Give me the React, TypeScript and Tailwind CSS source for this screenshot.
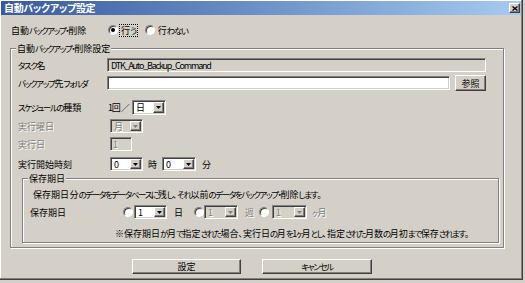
import React from 'react';

const sunken =
  'border border-t-[#808080] border-l-[#808080] border-r-white border-b-white shadow-[inset_1px_1px_0_#404040,inset_-1px_-1px_0_#d4d0c8]';
const raised =
  'border border-t-white border-l-white border-r-[#404040] border-b-[#404040] shadow-[inset_-1px_-1px_0_#808080,inset_1px_1px_0_#d4d0c8] bg-[#d4d0c8]';
const etched = 'border border-[#808080] shadow-[inset_1px_1px_0_#fff,1px_1px_0_#fff]';
const dis = 'text-[#808080] [text-shadow:1px_1px_0_#fff]';

// kana in the old UI font are much narrower than kanji, so squeeze them separately
function J({ t }: { t: string }) {
  const parts = t.match(/[\u4e00-\u9fff※\u3000-\u303f\uff00-\uffef]+|[A-Za-z0-9_]+|[^\u4e00-\u9fff※\u3000-\u303f\uff00-\uffefA-Za-z0-9_]+/g) ?? [];
  return (
    <>
      {parts.map((p, i) =>
        /[\u4e00-\u9fff※\u3000-\u303f\uff00-\uffef]/.test(p) ? (
          <span key={i} className="tracking-[0px]">{p}</span>
        ) : /[A-Za-z0-9_]/.test(p) ? (
          <span key={i} className="tracking-[-1.2px]">{p}</span>
        ) : (
          <span key={i} className="text-[8.5px] tracking-[-1.4px]">{p}</span>
        )
      )}
    </>
  );
}

function Combo({ value, className, disabled }: { value: string; className: string; disabled?: boolean }) {
  return (
    <div className={`flex p-[1px] ${sunken} ${disabled ? 'bg-[#d4d0c8]' : 'bg-white'} ${className}`}>
      <span className={`flex-1 pl-[2px] flex items-center ${disabled ? dis : ''}`}>{value}</span>
      <span className={`w-[11px] h-full flex items-center justify-center ${raised}`}>
        <svg width="5" height="3" viewBox="0 0 5 3">
          <path d="M0 0h5L2.5 3z" fill={disabled ? '#808080' : '#000'} />
        </svg>
      </span>
    </div>
  );
}

function Radio({ checked }: { checked?: boolean }) {
  return (
    <span className="w-[10px] h-[10px] shrink-0 rounded-full bg-white flex items-center justify-center border border-t-[#808080] border-l-[#808080] border-r-white border-b-white shadow-[inset_1px_1px_0_#404040]">
      {checked && <span className="w-[4px] h-[4px] rounded-full bg-black" />}
    </span>
  );
}

function GroupTitle({ t }: { t: string }) {
  return (
    <div className="w-fit ml-[5px] px-[1px] -mt-[7px] h-[13px] flex items-center bg-[#d4d0c8]">
      <J t={t} />
    </div>
  );
}

export default function App() {
  return (
    <div className="w-[525px] h-[283px] bg-[#d4d0c8] overflow-hidden text-black text-[9px] leading-none font-['Noto_Sans_CJK_JP',sans-serif] [font-feature-settings:'palt']">
      <div className="w-[523px] h-[280px] pt-[1px] shadow-[inset_-1px_-1px_0_#404040,inset_-2px_-2px_0_#808080,inset_1px_1px_0_#fff]">
        {/* title bar */}
        <div className="mx-[1px] mr-[2px] h-[14px] flex items-center justify-between bg-gradient-to-r from-[#3a5a9e] to-[#a6caf0]">
          <span className="ml-[3px] text-white font-bold text-[10px] tracking-[-0.3px]">自動バックアップ設定</span>
          <span className={`w-[11px] h-[10px] mr-[1px] flex items-center justify-center ${raised}`}>
            <svg width="6" height="5" viewBox="0 0 6 5">
              <path d="M0.5 0.5l5 4M5.5 0.5l-5 4" stroke="#000" strokeWidth="1.3" />
            </svg>
          </span>
        </div>

        {/* enable row */}
        <div className="mt-[8px] h-[14px] flex items-center">
          <span className="ml-[11px] w-[97px]"><J t="自動バックアップ・削除" /></span>
          <Radio checked />
          <span className="ml-[2px] px-[1px] py-[1px] outline outline-1 outline-dotted outline-black"><J t="行う" /></span>
          <span className="ml-[8px]"><Radio /></span>
          <span className="ml-[3px]"><J t="行わない" /></span>
        </div>

        {/* settings group */}
        <div className={`mt-[11px] ml-[10px] w-[494px] h-[200px] ${etched}`}>
          <GroupTitle t="自動バックアップ・削除設定" />

          <div className="mt-[3px] h-[14px] flex items-center">
            <span className="ml-[7px] w-[89px]"><J t="タスク名" /></span>
            <div className={`w-[379px] h-[14px] pl-[3px] flex items-center bg-[#d4d0c8] ${sunken}`}>
              <J t="DTK_Auto_Backup_Command" />
            </div>
          </div>

          <div className="mt-[4px] h-[14px] flex items-center">
            <span className="ml-[7px] w-[89px]"><J t="バックアップ先フォルダ" /></span>
            <div className={`w-[343px] h-[14px] bg-white ${sunken}`} />
            <span className={`ml-[5px] w-[31px] h-[16px] flex items-center justify-center ${raised}`}><J t="参照" /></span>
          </div>

          <div className="mt-[10px] h-[14px] flex items-center">
            <span className="ml-[7px] w-[90px]"><J t="スケジュールの種類" /></span>
            <span className="w-[24px]"><J t="1回／" /></span>
            <Combo value="日" className="w-[34px] h-[15px]" />
          </div>

          <div className="mt-[5px] h-[14px] flex items-center">
            <span className={`ml-[7px] w-[92px] ${dis}`}><J t="実行曜日" /></span>
            <Combo value="月" className="w-[33px] h-[14px]" disabled />
          </div>

          <div className="mt-[4px] h-[14px] flex items-center">
            <span className={`ml-[7px] w-[92px] ${dis}`}><J t="実行日" /></span>
            <div className={`w-[22px] h-[14px] pl-[2px] flex items-center bg-[#d4d0c8] ${sunken} ${dis}`}>1</div>
          </div>

          <div className="mt-[6px] h-[14px] flex items-center">
            <span className="ml-[7px] w-[92px]"><J t="実行開始時刻" /></span>
            <Combo value="0" className="w-[33px] h-[14px]" />
            <span className="ml-[5px] w-[14px]">時</span>
            <Combo value="0" className="w-[34px] h-[14px]" />
            <span className="ml-[6px]">分</span>
          </div>

          {/* retention group */}
          <div className={`mt-[7px] ml-[11px] w-[477px] h-[65px] ${etched}`}>
            <GroupTitle t="保存期日" />
            <div className="mt-[3px] h-[12px] flex items-center ml-[10px] whitespace-pre">
              <J t="保存期日 分のデータをデータベースに残し、それ以前のデータをバックアップ・削除します。" />
            </div>
            <div className="mt-[5px] h-[14px] flex items-center">
              <span className="ml-[7px] w-[93px]"><J t="保存期日" /></span>
              <Radio />
              <Combo value="1" className="ml-[1px] w-[33px] h-[14px]" />
              <span className="ml-[7px] w-[20px]">日</span>
              <Radio />
              <Combo value="1" className="w-[34px] h-[14px]" disabled />
              <span className={`ml-[7px] w-[14px] ${dis}`}>週</span>
              <Radio />
              <Combo value="1" className="ml-[3px] w-[35px] h-[14px]" disabled />
              <span className={`ml-[5px] ${dis}`}><J t="ヶ月" /></span>
            </div>
            <div className="mt-[8px] h-[12px] flex items-center ml-[92px]">
              <J t="※保存期日が月で指定された場合、実行日の月を1ヶ月とし、指定された月数の月初まで保存されます。" />
            </div>
          </div>
        </div>

        {/* buttons */}
        <div className="mt-[11px] flex">
          <span className={`ml-[132px] w-[109px] h-[15px] flex items-center justify-center ${raised}`}><J t="設定" /></span>
          <span className={`ml-[21px] w-[110px] h-[15px] flex items-center justify-center ${raised}`}><J t="キャンセル" /></span>
        </div>
      </div>
    </div>
  );
}
